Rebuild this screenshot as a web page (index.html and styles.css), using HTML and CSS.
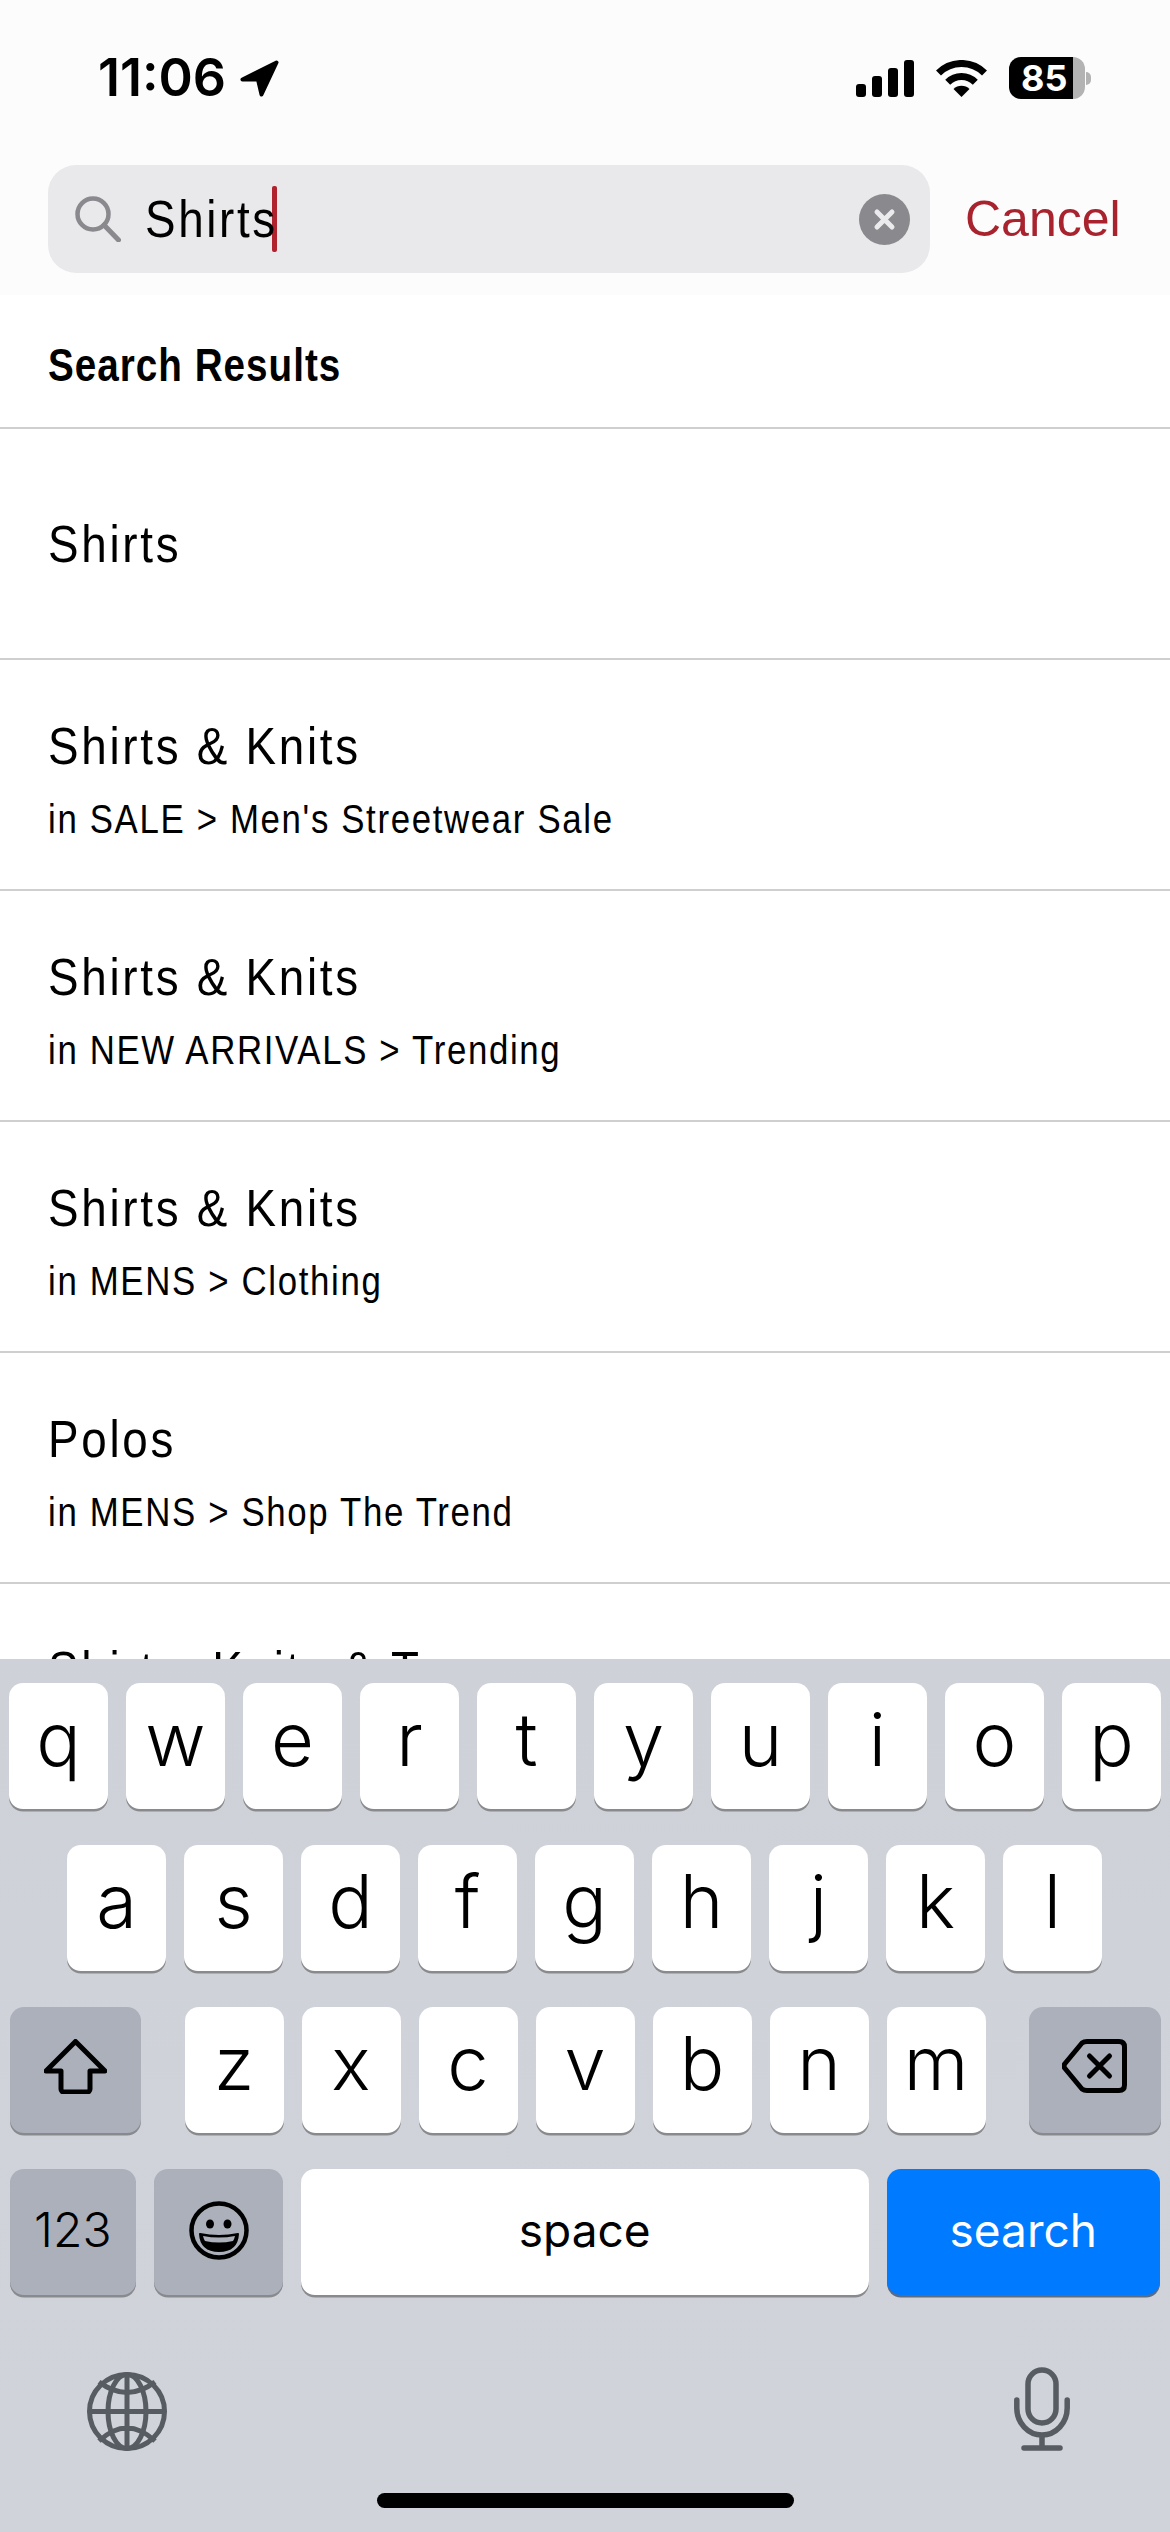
FILE: index.html
```html
<!DOCTYPE html>
<html lang="en">
<head>
<meta charset="utf-8">
<title>Search</title>
<link rel="stylesheet" href="styles.css">
</head>
<body>
<div class="app">
  <header class="top">
    <div class="status">
      <div class="status-left">
        <span class="time">11:06</span>
        <svg class="loc" viewBox="0 0 39 37"><path d="M36.500 2.500 2.500 19.500H18L21.500 34.500Z" fill="#000" stroke="#000" stroke-width="4" stroke-linejoin="round"/></svg>
      </div>
      <div class="status-right">
        <div class="signal"><i class="b1"></i><i class="b2"></i><i class="b3"></i><i class="b4"></i></div>
        <svg class="wifi" viewBox="0 0 51 37"><path d="M2.500 13A32.500 32.500 0 0 1 48.500 13" fill="none" stroke="#000" stroke-width="7"/><path d="M11.700 22.200A19.500 19.500 0 0 1 39.300 22.200" fill="none" stroke="#000" stroke-width="7"/><path d="M25.500 37 17.500 29A11.300 11.300 0 0 1 33.500 29Z" fill="#000"/></svg>
        <div class="battery"><div class="batt-body">85</div><div class="batt-cap"></div></div>
      </div>
    </div>
    <div class="search-row">
      <div class="search-bar">
        <svg class="mag" viewBox="0 0 46 46"><circle cx="18" cy="18" r="15.500" fill="none" stroke="#8a8a8e" stroke-width="4.500"/><path d="M29 29 43.500 44" stroke="#8a8a8e" stroke-width="5" stroke-linecap="round"/></svg>
        <span class="query-box"><span class="query">Shirts</span></span><span class="caret"></span>
        <span class="clear"><svg viewBox="0 0 51 51"><path d="M18 18 33 33M33 18 18 33" stroke="#ebebed" stroke-width="5" stroke-linecap="round"/></svg></span>
      </div>
      <span class="cancel">Cancel</span>
    </div>
  </header>
  <div class="results-head"><div class="head-text">Search Results</div></div>
  <div class="list">
    <div class="row solo"><div class="title">Shirts</div></div>
    <div class="row"><div class="title">Shirts &amp; Knits</div><div class="sub">in SALE &gt; Men's Streetwear Sale</div></div>
    <div class="row"><div class="title">Shirts &amp; Knits</div><div class="sub">in NEW ARRIVALS &gt; Trending</div></div>
    <div class="row"><div class="title">Shirts &amp; Knits</div><div class="sub">in MENS &gt; Clothing</div></div>
    <div class="row"><div class="title">Polos</div><div class="sub">in MENS &gt; Shop The Trend</div></div>
    <div class="row"><div class="title">Shirts, Knits &amp; Tees</div></div>
  </div>
  <div class="keyboard">
    <div class="k-row r1">
      <span class="key">q</span><span class="key">w</span><span class="key">e</span><span class="key">r</span><span class="key">t</span><span class="key">y</span><span class="key">u</span><span class="key">i</span><span class="key">o</span><span class="key">p</span>
    </div>
    <div class="k-row r2">
      <span class="key">a</span><span class="key">s</span><span class="key">d</span><span class="key">f</span><span class="key">g</span><span class="key">h</span><span class="key">j</span><span class="key">k</span><span class="key">l</span>
    </div>
    <div class="k-row r3">
      <span class="key gray shift"><svg class="i-shift" viewBox="0 0 63 55"><path d="M31.500 2.500 61 32H46V50A3 3 0 0 1 43 53H20A3 3 0 0 1 17 50V32H2Z" fill="none" stroke="#000" stroke-width="5" stroke-linejoin="round"/></svg></span>
      <div class="letters"><span class="key">z</span><span class="key">x</span><span class="key">c</span><span class="key">v</span><span class="key">b</span><span class="key">n</span><span class="key">m</span></div>
      <span class="key gray shift"><svg class="i-del" viewBox="0 0 65 54"><path d="M3 24.500 20 4Q22 2.500 25 2.500H57Q62.500 2.500 62.500 8V46Q62.500 51.500 57 51.500H25Q22 51.500 20 50L3 29.500Q1 27 3 24.500Z" fill="none" stroke="#000" stroke-width="5" stroke-linejoin="round"/><path d="M27.500 17 47.500 37M47.500 17 27.500 37" stroke="#000" stroke-width="5" stroke-linecap="round"/></svg></span>
    </div>
    <div class="k-row r4">
      <span class="key gray small num">123</span>
      <span class="key gray small emoji"><svg class="i-emoji" viewBox="0 0 60 59"><ellipse cx="30" cy="29.500" rx="27.500" ry="27" fill="none" stroke="#000" stroke-width="4.500"/><ellipse cx="21" cy="23" rx="4" ry="4.500" fill="#000"/><ellipse cx="38.500" cy="23" rx="4" ry="4.500" fill="#000"/><path d="M11 33Q30 37 49 33Q48 50 30 50Q12 50 11 33Z" fill="#000" stroke="#000" stroke-width="2" stroke-linejoin="round"/><path d="M14 35Q30 38 46 35Q45 39 44 40Q30 43 16 40Q15 39 14 35Z" fill="#abb0ba"/></svg></span>
      <span class="key small space">space</span>
      <span class="key small go">search</span>
    </div>
    <div class="k-tools">
      <svg class="i-globe" viewBox="0 0 80 79"><g fill="none" stroke="#575b62" stroke-width="5"><ellipse cx="40" cy="39.500" rx="37.500" ry="37"/><ellipse cx="40" cy="39.500" rx="19" ry="37"/><path d="M40 2.500V76.500M2.500 39.500H77.500M12 10Q40 31 68 10M12 69Q40 43 68 69"/></g></svg>
      <svg class="i-mic" viewBox="0 0 56 84"><g fill="none" stroke="#575b62" stroke-width="5.500" stroke-linecap="round"><rect x="14" y="3" width="28" height="53" rx="14"/><path d="M2.800 33V41A25.200 27 0 0 0 53.200 41V33"/><path d="M28 69V81M10 81H46"/></g></svg>
    </div>
    <div class="home"></div>
  </div>
</div>
</body>
</html>
```
FILE: styles.css
```css
* { box-sizing: border-box; }
html, body { margin: 0; padding: 0; background: #fff; }
.app { width: 1170px; height: 2532px; display: flex; flex-direction: column; overflow: hidden; font-family: "Liberation Sans", sans-serif; color: #000; }

.top { background: #fcfcfc; height: 295px; flex-shrink: 0; }
.status { height: 165px; padding: 57px 79px 0 98px; display: flex; justify-content: space-between; align-items: flex-start; }
.status-left { display: flex; align-items: center; height: 42px; gap: 14px; }
.time { font-family: Inter, sans-serif; font-weight: 600; font-size: 52px; line-height: 42px; }
.loc { width: 39px; height: 37px; }
.status-right { display: flex; align-items: center; height: 42px; }
.signal { display: flex; align-items: flex-end; gap: 6px; height: 37px; width: 58px; }
.signal i { display: block; width: 10px; background: #000; border-radius: 3px; }
.b1 { height: 13px; } .b2 { height: 21px; } .b3 { height: 29px; } .b4 { height: 37px; }
.wifi { width: 51px; height: 37px; margin-left: 22px; }
.battery { display: flex; align-items: center; margin-left: 22px; }
.batt-body { width: 76px; height: 42px; border-radius: 12px; background: linear-gradient(to right, #000 84%, #b3b3b3 84%); color: #fff; font-family: Inter, sans-serif; font-weight: 700; font-size: 36px; line-height: 42px; padding-left: 12px; }
.batt-cap { width: 5px; height: 13px; margin-left: 1px; background: #b3b3b3; border-radius: 0 6px 6px 0; }

.search-row { display: flex; align-items: center; padding-left: 48px; height: 108px; }
.search-bar { width: 882px; height: 108px; border-radius: 28px; background: #e9e9eb; display: flex; align-items: center; padding: 0 20px 0 27px; }
.mag { width: 46px; height: 46px; flex-shrink: 0; }
.query-box { width: 127px; margin-left: 24px; display: block; }
.query { display: block; font-size: 52px; line-height: 60px; letter-spacing: 3px; white-space: nowrap; transform: scaleX(0.88); transform-origin: left center; }
.caret { width: 5px; height: 66px; background: #b0222e; border-radius: 2px; }
.clear { width: 51px; height: 51px; border-radius: 50%; background: #8a8a8e; margin-left: auto; display: flex; }
.clear svg { width: 51px; height: 51px; }
.cancel { margin-left: 35px; font-size: 50px; line-height: 60px; color: #a8232e; }

.results-head { height: 134px; flex-shrink: 0; padding: 46px 48px 0; border-bottom: 2px solid #cfcfcf; }
.head-text { font-weight: 700; font-size: 46px; line-height: 48px; letter-spacing: 1.2px; white-space: nowrap; transform: scaleX(0.84); transform-origin: left center; }

.list { flex: 1; min-height: 0; overflow: hidden; }
.row { height: 231px; border-bottom: 2px solid #cfcfcf; padding: 56px 48px 0; }
.row.solo { display: flex; flex-direction: column; justify-content: center; padding-top: 0; }
.title { font-size: 52px; line-height: 60px; letter-spacing: 3.1px; white-space: nowrap; transform: scaleX(0.88); transform-origin: left center; }
.sub { font-size: 40px; line-height: 46px; margin-top: 20px; letter-spacing: 1.9px; white-space: nowrap; transform: scaleX(0.87); transform-origin: left center; }

.keyboard { flex-shrink: 0; height: 873px; background: linear-gradient(#ced2d8, #d1d3da); padding-top: 24px; font-family: Inter, sans-serif; }
.k-row { display: flex; gap: 18px; height: 126px; margin-bottom: 36px; }
.key { display: flex; align-items: center; justify-content: center; background: #fff; border-radius: 14px; box-shadow: 0 2.500px 0 #898a8d; font-weight: 300; font-size: 74px; line-height: 80px; padding-bottom: 14px; width: 99px; color: #000; }
.r1 { padding: 0 9px; }
.r2 { padding: 0 67px; }
.r3 { padding: 0 9.500px; justify-content: space-between; }
.letters { display: flex; gap: 18px; }
.r3 .key.shift { width: 131.500px; padding-bottom: 8px; }
.gray { background: #abb0ba; }
.r4 { padding: 0 9.500px; margin-bottom: 0; }
.key.small { font-size: 46px; font-weight: 400; line-height: 56px; padding-bottom: 4px; }
.key.num { width: 126.500px; font-size: 48px; font-weight: 300; }
.emoji { width: 129px; }
.space { width: 567.500px; }
.go { width: 273.500px; background: #007aff; color: #fff; box-shadow: 0 2.500px 0 #5c6b80; }
.i-shift { width: 63px; height: 55px; }
.i-del { width: 65px; height: 54px; }
.i-emoji { width: 60px; height: 59px; }
.k-tools { display: flex; justify-content: space-between; align-items: flex-end; padding: 0 100px 0 87px; margin-top: 72px; height: 84px; }
.i-globe { width: 80px; height: 79px; }
.i-mic { width: 56px; height: 84px; }
.home { width: 417px; height: 15px; border-radius: 8px; background: #000; margin: 42px auto 0; }
```
